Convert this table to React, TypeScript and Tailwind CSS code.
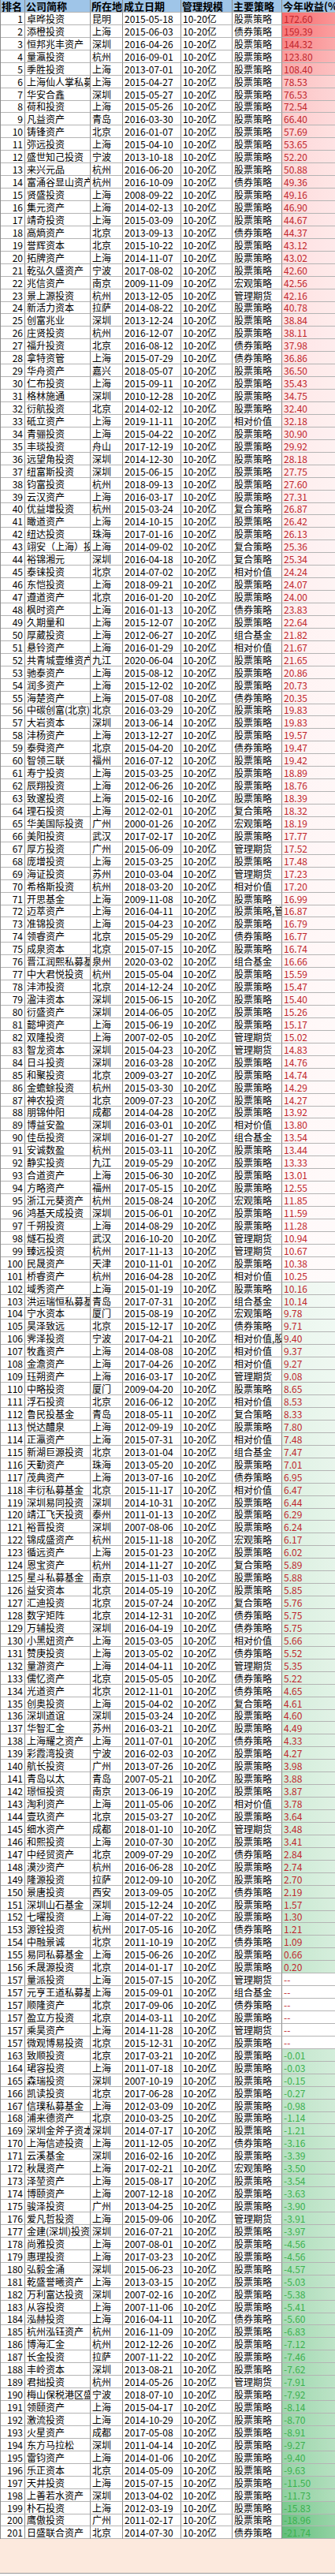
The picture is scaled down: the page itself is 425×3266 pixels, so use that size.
const ROWS = `1|卓晔投资|昆明|2015-05-18|股票策略|172.60
2|添橙投资|上海|2015-06-03|债券策略|159.39
3|恒邦兆丰资产|深圳|2016-04-26|股票策略|144.32
4|量瀛投资|杭州|2016-09-01|股票策略|123.80
5|季胜投资|上海|2013-07-01|股票策略|108.40
6|上海仙人掌私募基金|上海|2015-04-27|股票策略|78.53
7|华安合鑫|深圳|2015-05-27|股票策略|76.53
8|荷和投资|上海|2015-05-26|股票策略|72.54
9|凡益资产|青岛|2016-03-30|股票策略|66.40
10|铸锋资产|北京|2016-01-07|股票策略|57.69
11|弥远投资|上海|2015-04-10|股票策略|53.65
12|盛世知己投资|宁波|2013-10-18|股票策略|52.20
13|来兴元品|杭州|2016-06-20|股票策略|50.88
14|富涌谷显山资产|杭州|2016-10-09|债券策略|49.36
15|贤盛投资|上海|2008-09-22|股票策略|49.16
16|集元资产|上海|2014-02-13|股票策略|46.90
17|靖奇投资|上海|2015-03-09|股票策略|44.67
18|高熵资产|北京|2013-09-13|债券策略|44.37
19|誉辉资本|北京|2015-10-22|股票策略|43.12
20|拓牌资产|上海|2014-11-07|股票策略|43.02
21|乾弘久盛资产|宁波|2017-08-02|股票策略|42.60
22|兆信资产|南京|2009-11-09|宏观策略|42.56
23|景上源投资|杭州|2013-12-05|管理期货|42.16
24|新活力资本|拉萨|2014-08-22|股票策略|40.78
25|创富兆业|深圳|2013-12-24|股票策略|38.84
26|庄贤投资|杭州|2016-12-07|股票策略|38.11
27|福升投资|北京|2016-08-12|债券策略|37.98
28|拿特资管|上海|2015-07-29|债券策略|36.86
29|华舟资产|嘉兴|2018-05-07|股票策略|36.50
30|仁布投资|上海|2015-09-11|股票策略|35.43
31|格林施通|深圳|2010-12-28|股票策略|34.75
32|衍航投资|北京|2014-02-12|股票策略|32.40
33|砥立资产|上海|2019-11-11|相对价值|32.18
34|青骊投资|上海|2015-04-22|股票策略|30.90
35|丰琰投资|舟山|2017-12-19|股票策略|29.92
36|远望角投资|深圳|2014-12-30|股票策略|28.18
37|纽富斯投资|深圳|2015-06-15|股票策略|27.75
38|钧富投资|杭州|2018-09-13|股票策略|27.60
39|云汉资产|上海|2016-03-17|股票策略|27.31
40|优益增投资|杭州|2015-03-24|复合策略|26.87
41|瞰道资产|上海|2014-10-15|股票策略|26.42
42|纽达投资|珠海|2017-01-16|股票策略|26.13
43|翊安（上海）投资|上海|2014-09-02|复合策略|25.36
44|裕锦湘元|深圳|2016-04-18|复合策略|25.34
45|泰铼投资|北京|2014-07-02|相对价值|24.24
46|东恺投资|上海|2018-09-21|股票策略|24.07
47|遵道资产|北京|2016-01-20|股票策略|24.00
48|枫时资产|上海|2016-01-13|债券策略|23.83
49|久期量和|上海|2015-12-07|股票策略|22.64
50|厚葳投资|上海|2012-06-27|组合基金|21.82
51|悬铃资产|上海|2016-01-29|相对价值|21.67
52|共青城壹维资产|九江|2020-06-04|股票策略|21.65
53|驰泰资产|上海|2015-08-12|股票策略|20.86
54|润多资产|上海|2015-12-02|股票策略|20.73
55|海楚资产|上海|2015-07-08|债券策略|20.35
56|中碳创富(北京)|北京|2016-03-29|股票策略|19.83
57|大岩资本|深圳|2013-06-14|股票策略|19.83
58|沣杨资产|上海|2013-12-27|股票策略|19.57
59|泰舜资产|北京|2015-04-20|债券策略|19.47
60|智领三联|福州|2016-07-12|股票策略|19.42
61|寿宁投资|上海|2015-03-25|股票策略|18.89
62|辰翔投资|上海|2012-06-26|股票策略|18.76
63|致邃投资|上海|2015-02-16|股票策略|18.39
64|理石投资|上海|2012-02-01|复合策略|18.32
65|华美国际投资|广州|2000-01-26|宏观策略|18.19
66|美阳投资|武汉|2017-02-17|股票策略|17.77
67|厚方投资|广州|2015-06-09|管理期货|17.52
68|庞增投资|上海|2015-03-25|股票策略|17.48
69|海证投资|苏州|2010-03-04|管理期货|17.23
70|希格斯投资|杭州|2018-03-20|相对价值|17.20
71|开思基金|上海|2009-11-08|股票策略|16.99
72|迈萃资产|上海|2016-04-11|股票策略,管理期货|16.87
73|准锦投资|上海|2015-04-23|股票策略|16.79
74|领睿资产|北京|2015-05-29|债券策略|16.77
75|成泉资本|北京|2015-07-15|股票策略|16.74
76|晋江润熙私募基金|泉州|2020-03-02|组合基金|16.66
77|中大君悦投资|杭州|2015-05-04|股票策略|15.59
78|沣沛投资|北京|2014-12-24|股票策略|15.47
79|溋沣资本|深圳|2015-06-15|股票策略|15.40
80|衍盛资产|深圳|2014-06-05|股票策略|15.26
81|懿坤资产|上海|2015-06-19|股票策略|15.17
82|双隆投资|上海|2007-02-05|管理期货|15.02
83|智龙资本|深圳|2015-04-23|管理期货|14.83
84|日斗投资|深圳|2016-03-28|股票策略|14.76
85|和聚投资|北京|2009-03-27|股票策略|14.74
86|金蟾蜍投资|杭州|2015-03-30|股票策略|14.29
87|神农投资|北京|2009-07-23|股票策略|14.27
88|朋锦仲阳|成都|2014-04-28|股票策略|13.92
89|博益安盈|深圳|2016-03-01|相对价值|13.80
90|佳岳投资|深圳|2016-01-27|组合基金|13.54
91|安诚数盈|杭州|2015-03-11|股票策略|13.44
92|静实投资|九江|2019-05-29|股票策略|13.33
93|合道资产|上海|2015-06-30|股票策略|13.01
94|方略资产|福州|2017-05-15|股票策略|12.55
95|浙江元葵资产|杭州|2015-08-24|宏观策略|11.85
96|鸿基天成投资|深圳|2015-06-01|股票策略|11.59
97|千朔投资|上海|2014-08-29|股票策略|11.28
98|燧石投资|武汉|2016-10-20|管理期货|10.94
99|臻远投资|杭州|2017-11-13|管理期货|10.67
100|民晟资产|天津|2010-11-01|股票策略|10.38
101|桥睿资产|杭州|2016-04-28|相对价值|10.25
102|域秀资产|上海|2015-01-19|股票策略|10.16
103|洪运瑞恒私募基金|青岛|2017-07-31|组合基金|10.14
104|宁水资本|厦门|2015-08-19|宏观策略|9.78
105|昊泽致远|北京|2015-12-17|债券策略|9.71
106|霁泽投资|宁波|2017-04-21|相对价值,股票策略|9.40
107|牧鑫资产|上海|2014-08-08|相对价值|9.37
108|金澹资产|上海|2017-04-26|相对价值|9.27
109|珏朔资产|上海|2016-03-17|管理期货|9.08
110|中略投资|厦门|2009-04-20|股票策略|8.65
111|浮石投资|北京|2016-06-12|相对价值|8.53
112|鲁民投基金|青岛|2018-05-11|复合策略|8.33
113|悦达醴泉|上海|2012-09-19|股票策略|7.80
114|正瀛资产|上海|2015-07-31|相对价值|7.48
115|新湖巨源投资|北京|2013-01-04|组合基金|7.47
116|天勤资产|珠海|2013-05-20|股票策略|7.01
117|茂典资产|上海|2013-07-16|债券策略|6.95
118|丰衍私募基金|北京|2015-11-17|相对价值|6.47
119|深圳易同投资|深圳|2014-10-31|股票策略|6.44
120|靖江飞天投资|泰州|2011-01-13|股票策略|6.29
121|裕晋投资|深圳|2007-08-06|股票策略|6.24
122|锦成盛资产|杭州|2015-11-18|宏观策略|6.17
123|循远资产|上海|2015-01-23|股票策略|6.02
124|恩宝资产|杭州|2014-11-27|复合策略|5.89
125|星斗私募基金|南京|2015-11-03|股票策略|5.88
126|益安资本|北京|2014-05-19|股票策略|5.85
127|汇迪投资|北京|2015-07-24|复合策略|5.76
128|数字矩阵|北京|2014-12-31|债券策略|5.75
129|万辅投资|深圳|2016-04-19|债券策略|5.75
130|小黑妞资产|上海|2015-03-05|相对价值|5.66
131|赞庚投资|上海|2013-05-02|债券策略|5.52
132|量游资产|上海|2014-04-11|管理期货|5.35
133|儒忆资产|北京|2015-05-05|债券策略|5.22
134|光道资产|北京|2012-11-01|债券策略|4.65
135|创奥投资|上海|2015-04-02|复合策略|4.61
136|深圳道谊|深圳|2015-03-24|股票策略|4.60
137|华智汇金|苏州|2016-03-21|股票策略|4.49
138|上海耀之资产|上海|2011-07-01|债券策略|4.33
139|彩霞湾投资|宁波|2016-02-03|股票策略|4.27
140|航长投资|广州|2013-07-26|股票策略|3.98
141|青岛以太|青岛|2007-05-21|股票策略|3.88
142|璟恒投资|南京|2013-06-19|股票策略|3.87
143|淘利资产|上海|2011-05-06|相对价值|3.78
144|壹玖资产|北京|2015-03-27|股票策略|3.64
145|细水资产|成都|2018-01-10|管理期货|3.48
146|和熙投资|上海|2010-07-30|股票策略|3.41
147|中经贸资产|北京|2009-07-29|债券策略|2.84
148|漠沙资产|杭州|2016-06-28|股票策略|2.74
149|隆源投资|拉萨|2012-09-10|股票策略|2.70
150|景唐投资|西安|2013-09-05|债券策略|2.19
151|深圳山石基金|深圳|2015-12-24|股票策略|1.57
152|七曜投资|上海|2014-07-22|股票策略|1.30
153|源铨投资|杭州|2017-05-16|债券策略|1.21
154|中融景诚|北京|2011-10-19|债券策略|1.09
155|易同私募基金|上海|2015-06-26|股票策略|0.66
156|禾晟源投资|北京|2014-01-17|股票策略|0.20
157|量派投资|上海|2015-07-15|管理期货|--
157|元亨王道私募基金|上海|2015-09-01|组合基金|--
157|顺隆资产|北京|2017-09-06|债券策略|--
157|盈立方投资|北京|2014-03-11|股票策略|--
157|乘昊资产|上海|2014-11-28|管理期货|--
157|微观博易投资|北京|2015-12-31|股票策略|--
163|致顺投资|北京|2017-03-21|股票策略|-0.01
164|珺容投资|上海|2011-07-18|股票策略|-0.03
165|森瑞投资|深圳|2007-10-19|股票策略|-0.15
166|凯读投资|北京|2017-06-28|股票策略|-0.27
167|信璞私募基金|上海|2012-03-09|股票策略|-0.98
168|浦来德资产|北京|2010-03-25|股票策略|-1.14
169|深圳金斧子资本|深圳|2014-07-17|股票策略|-1.21
170|上海信迹投资|上海|2011-12-05|债券策略|-3.16
171|云溪基金|深圳|2016-02-16|股票策略|-3.39
172|秋晟资产|上海|2017-02-21|宏观策略|-3.50
173|泽堃资产|上海|2015-08-17|股票策略|-3.54
174|博颐资产|上海|2007-12-18|股票策略|-3.63
175|骏泽投资|广州|2013-04-25|股票策略|-3.90
176|爱凡哲投资|上海|2015-09-06|管理期货|-3.91
177|金建(深圳)投资|深圳|2016-07-21|股票策略|-3.97
178|尚雅投资|上海|2007-08-01|股票策略|-4.56
179|惠理投资|上海|2017-03-23|股票策略|-4.56
180|弘毅金涌|深圳|2015-06-23|股票策略|-4.57
181|乾盛誉曦资产|上海|2013-03-15|股票策略|-5.03
182|万利富达投资|深圳|2007-02-16|股票策略|-5.38
183|从容投资|上海|2007-11-06|股票策略|-5.41
184|泓赫投资|上海|2016-04-11|债券策略|-5.60
185|杭州泓钰资产|杭州|2016-11-09|股票策略|-6.83
186|博海汇金|杭州|2012-12-26|股票策略|-7.12
187|长金投资|拉萨|2007-11-22|股票策略|-7.46
188|丰岭资本|深圳|2013-08-21|股票策略|-7.62
189|君拙投资|杭州|2014-05-26|管理期货|-7.91
190|梅山保税港区盛|宁波|2018-07-10|股票策略|-7.92
191|领颐资产|上海|2015-04-17|股票策略|-8.14
192|激流投资|上海|2014-10-29|股票策略|-8.70
193|火星资产|成都|2017-05-08|股票策略|-8.91
194|东方马拉松|深圳|2011-04-14|股票策略|-9.27
195|雷钧资产|上海|2014-01-06|股票策略|-9.40
196|乐正资本|北京|2014-05-09|股票策略|-9.63
197|天井投资|上海|2015-07-15|股票策略|-11.50
198|上善若水资产|深圳|2013-04-02|股票策略|-11.73
199|朴石投资|上海|2012-03-19|股票策略|-15.83
200|鹰傲投资|广州|2011-02-17|股票策略|-18.96
201|日盛联合资产|北京|2014-07-30|债券策略|-21.74`
  .split("\n")
  .map((l) => l.split("|"));

const MAX = 172.6;
const MID = 10.25;
const MIN = -21.74;

function mix(c: number[], t: number) {
  const r = c.map((v) => Math.round(255 - (255 - v) * t));
  return `rgb(${r[0]},${r[1]},${r[2]})`;
}

// 3-colour scale, red at top, white at median, green at bottom
function scale(ret: string) {
  if (ret === "--") return undefined;
  const v = parseFloat(ret);
  let c: number[];
  let t: number;
  if (v >= MID) {
    c = [248, 105, 107];
    t = 0.04 + 0.96 * Math.pow((v - MID) / (MAX - MID), 1.1);
  } else {
    c = [99, 190, 123];
    t = 0.12 + 0.88 * ((MID - v) / (MID - MIN));
  }
  return `linear-gradient(to right, ${mix(c, t)}, ${mix(c, t * 0.7)})`;
}

const cell = "flex items-center overflow-hidden whitespace-nowrap border-r border-b border-r-[#8a8a8a] border-b-[#b4b4b4]";
const cols = "grid grid-cols-[31px_83px_41px_74px_65px_63px_68px] h-[15.95px]";

export default function App() {
  return (
    <div className="w-[425px] bg-white text-[12px] leading-[15px] text-black [font-family:'Noto_Sans_CJK_SC','Noto_Sans',sans-serif]">
      <div className={`${cols} bg-[#9fc5e8] font-bold text-[13px] border-l border-l-[#8a8a8a]`}>
        {["排名", "公司简称", "所在地", "成立日期", "管理规模", "主要策略", "今年收益(%)"].map((h) => (
          <div key={h} className={`${cell} pl-[1px]`}>{h}</div>
        ))}
      </div>
      {ROWS.map(([rank, name, loc, date, strat, ret], i) => {
        const neg = ret.startsWith("-") && ret !== "--";
        return (
          <div key={i} className={`${cols} border-l border-l-[#8a8a8a]`}>
            <div className={`${cell} justify-end pr-[2px]`}>{rank}</div>
            <div className={`${cell} pl-[2px]`}>{name}</div>
            <div className={`${cell} pl-[2px]`}>{loc}</div>
            <div className={`${cell} pl-[2px]`}>{date}</div>
            <div className={`${cell} pl-[2px]`}>10-20亿</div>
            <div className={`${cell} pl-[2px]`}>{strat}</div>
            <div
              className={`${cell} pl-[2px] ${neg ? "text-[#3cb14f]" : "text-[#c0262d]"}`}
              style={{ background: scale(ret) }}
            >
              {ret}
            </div>
          </div>
        );
      })}
      <div className="h-[44px] bg-[#fce9dd] border-b border-[#9a9a9a]" />
    </div>
  );
}
